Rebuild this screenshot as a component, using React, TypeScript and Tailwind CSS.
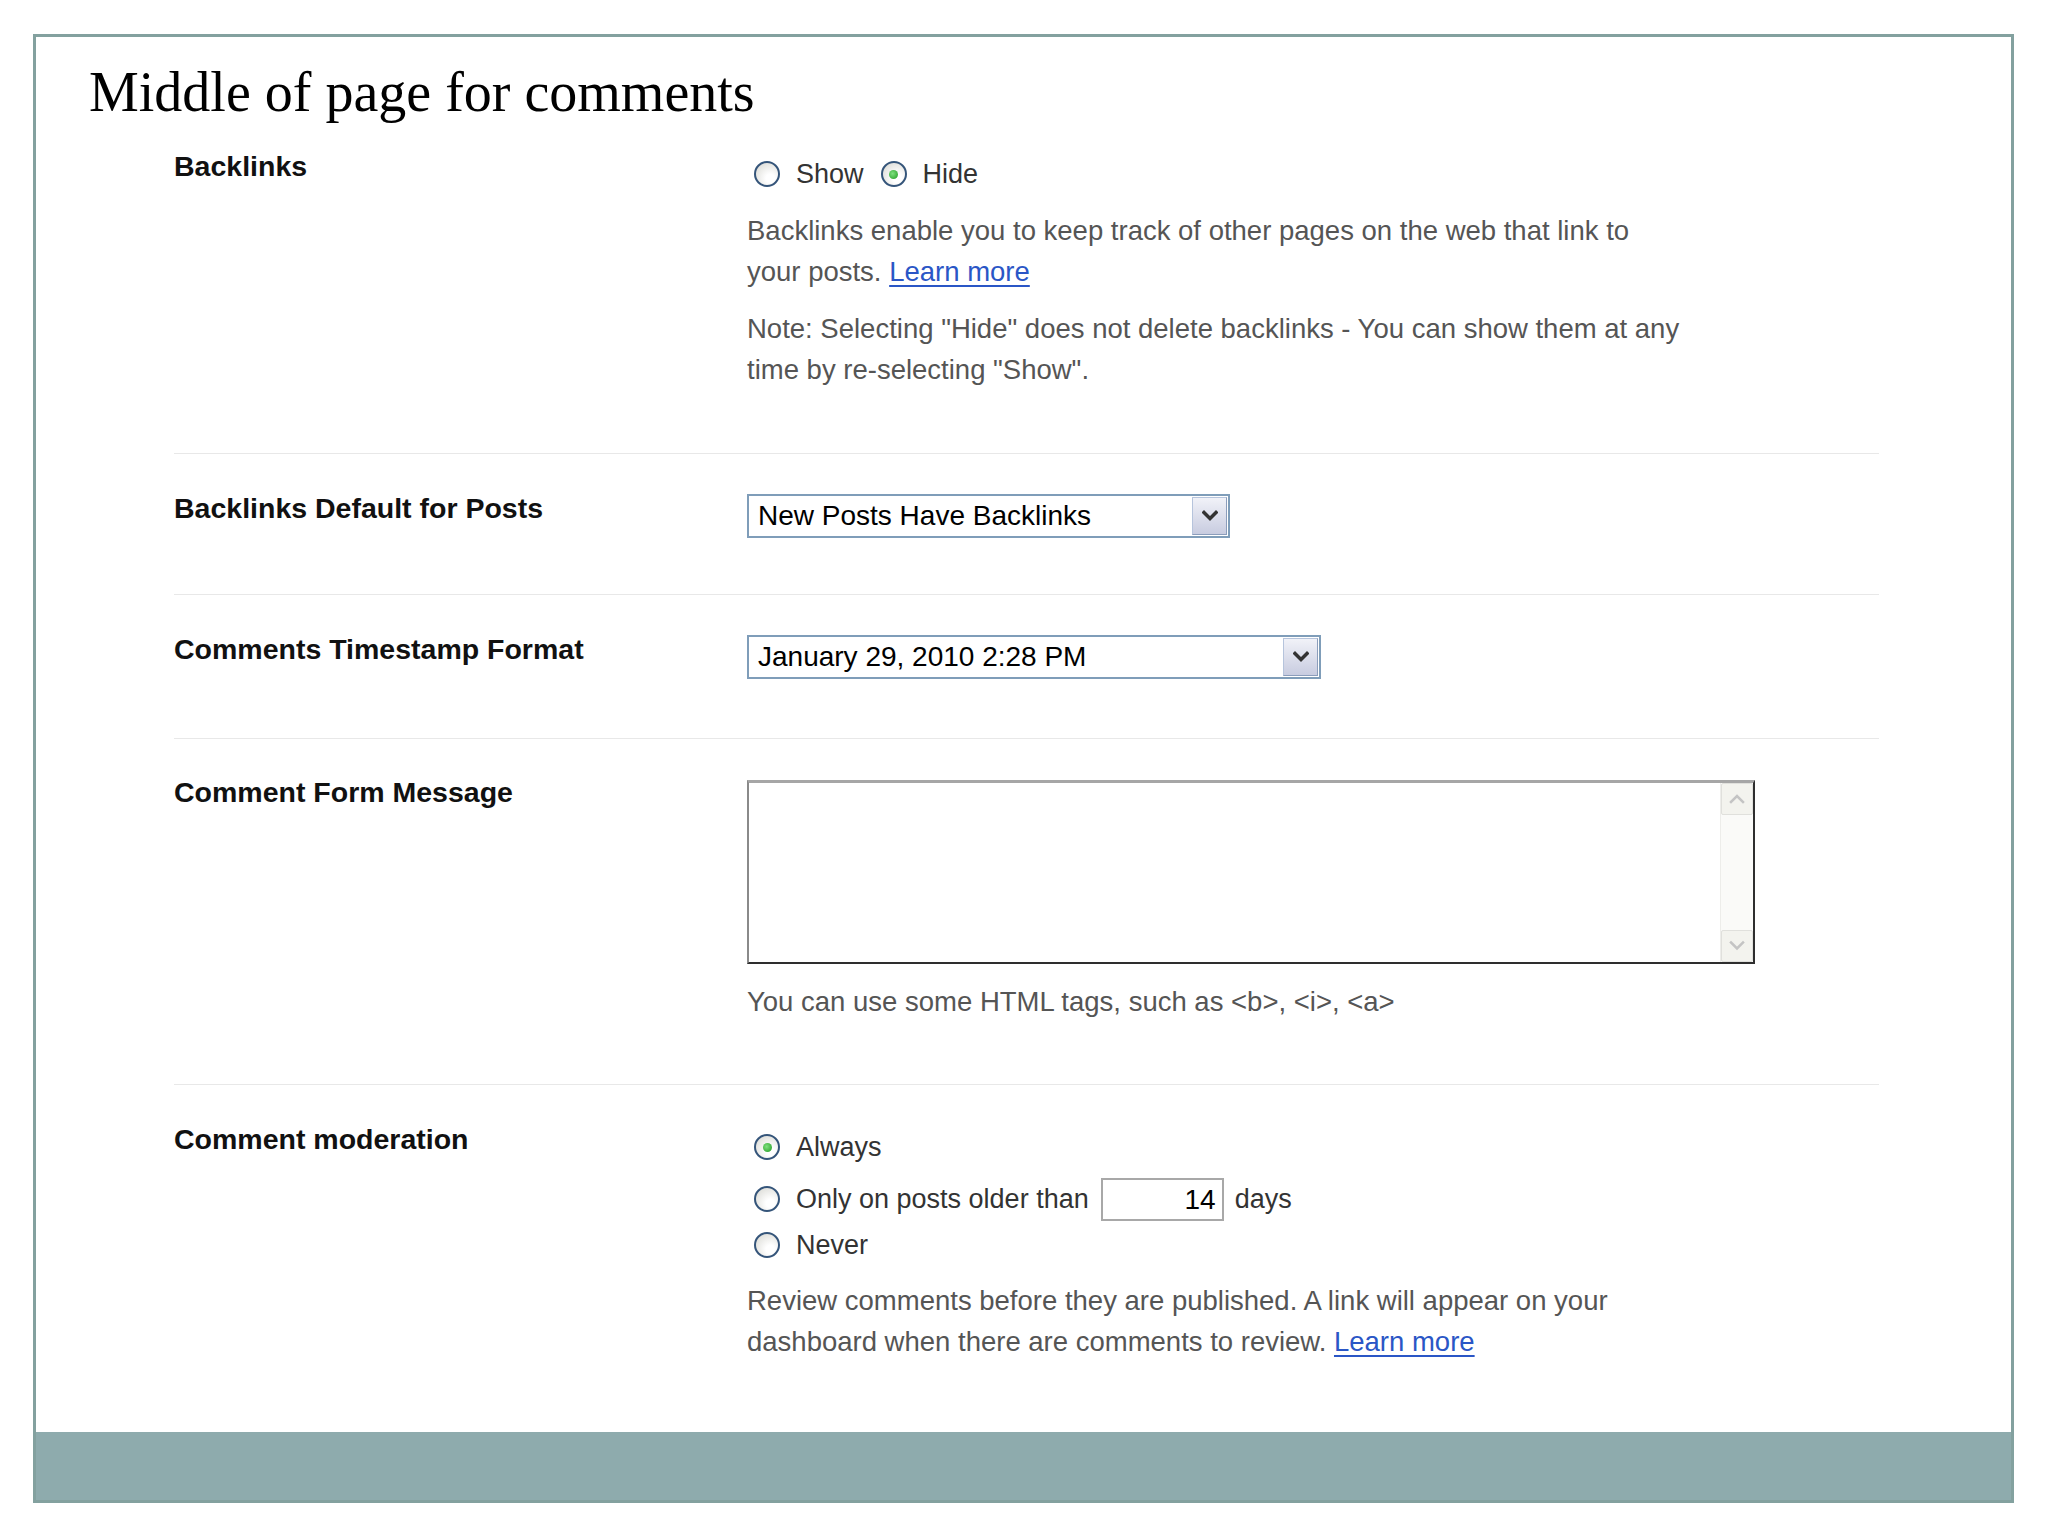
const sans = 'font-["Liberation_Sans",Arial,sans-serif]';

function Radio({ checked }: { checked?: boolean }) {
  return (
    <span className="flex h-[26px] w-[26px] shrink-0 items-center justify-center rounded-full border-2 border-[#35557a] bg-[radial-gradient(circle_at_65%_70%,#ffffff_20%,#d6d6d0_100%)]">
      {checked && (
        <span className="h-[9px] w-[9px] rounded-full bg-[radial-gradient(circle_at_40%_40%,#7fe07f,#1f9a1f)]" />
      )}
    </span>
  );
}

function Chevron({ color, width, up }: { color: string; width: number; up?: boolean }) {
  return (
    <svg width="16" height="12" viewBox="0 0 16 12" fill="none">
      <path d={up ? 'M2 9 L8 3 L14 9' : 'M2 2.5 L8 8.5 L14 2.5'} stroke={color} strokeWidth={width} strokeLinecap="square" />
    </svg>
  );
}

function SelectArrow() {
  return (
    <div className="flex w-[35px] shrink-0 items-center justify-center border border-[#b6c4dc] border-r-[#8b9dbb] border-b-[#8b9dbb] bg-gradient-to-b from-[#f1f2f8] to-[#c8cce0]">
      <Chevron color="#333333" width={3.5} />
    </div>
  );
}

export default function App() {
  return (
    <div className={`h-[1536px] w-[2048px] overflow-hidden bg-white pt-[34px] pl-[33px] ${sans}`}>
      <div className="flex h-[1469px] w-[1981px] flex-col border-[3px] border-[#83a19f]">
        <div className="flex-1">
          {/* heading */}
          <h1 className='mt-[23px] pl-[53px] font-["Liberation_Serif","Times_New_Roman",serif] text-[56px] leading-[64px] text-black'>
            Middle of page for comments
          </h1>

          <div className="ml-[138px] w-[1705px]">
            {/* Backlinks */}
            <div className="flex border-b border-[#e8e8e8]">
              <div className="w-[573px] shrink-0 pt-[24px] text-[28.5px] leading-[36px] font-bold text-[#111]">Backlinks</div>
              <div className="pt-[32px] pb-[63px]">
                <div className="flex h-[36px] items-center text-[27px] text-[#333]">
                  <span className="ml-[7px]"><Radio /></span>
                  <span className="ml-[16px]">Show</span>
                  <span className="ml-[17px]"><Radio checked /></span>
                  <span className="ml-[16px]">Hide</span>
                </div>
                <p className="mt-[18px] text-[27.5px] leading-[41px] text-[#555]">
                  Backlinks enable you to keep track of other pages on the web that link to
                  <br />
                  your posts. <a className="text-[#2a56c6] underline underline-offset-4">Learn more</a>
                </p>
                <p className="mt-[16px] text-[27.5px] leading-[41px] text-[#555]">
                  Note: Selecting "Hide" does not delete backlinks - You can show them at any
                  <br />
                  time by re-selecting "Show".
                </p>
              </div>
            </div>

            {/* Backlinks default */}
            <div className="flex border-b border-[#e8e8e8]">
              <div className="w-[573px] shrink-0 pt-[36px] text-[28.5px] leading-[36px] font-bold text-[#111]">Backlinks Default for Posts</div>
              <div className="pt-[40px] pb-[56px]">
                <div className="flex h-[44px] w-[483px] border-2 border-[#7f9db9] bg-white p-[1px]">
                  <div className="flex-1 pl-[8px] text-[28px] leading-[38px] text-black">New Posts Have Backlinks</div>
                  <SelectArrow />
                </div>
              </div>
            </div>

            {/* Timestamp */}
            <div className="flex border-b border-[#e8e8e8]">
              <div className="w-[573px] shrink-0 pt-[36px] text-[28.5px] leading-[36px] font-bold text-[#111]">Comments Timestamp Format</div>
              <div className="pt-[40px] pb-[59px]">
                <div className="flex h-[44px] w-[574px] border-2 border-[#7f9db9] bg-white p-[1px]">
                  <div className="flex-1 pl-[8px] text-[28px] leading-[38px] text-black">January 29, 2010 2:28 PM</div>
                  <SelectArrow />
                </div>
              </div>
            </div>

            {/* Comment form message */}
            <div className="flex border-b border-[#e8e8e8]">
              <div className="w-[573px] shrink-0 pt-[35px] text-[28.5px] leading-[36px] font-bold text-[#111]">Comment Form Message</div>
              <div className="pt-[41px] pb-[62px]">
                <div className="flex h-[184px] w-[1008px] border-2 border-t-[3px] border-[#2e2e2e] border-t-[#a6a6a6] border-l-[#8a8a8a] bg-white">
                  <div className="flex-1" />
                  <div className="flex w-[33px] flex-col justify-between border-l border-[#ededea] bg-[#fafaf8]">
                    <div className="flex h-[32px] items-center justify-center rounded-[2px] border border-[#e0e0dc] bg-[#f3f3ee]">
                      <Chevron color="#c4c4c4" width={2.5} up />
                    </div>
                    <div className="flex h-[32px] items-center justify-center rounded-[2px] border border-[#e0e0dc] bg-[#f3f3ee]">
                      <Chevron color="#c4c4c4" width={2.5} />
                    </div>
                  </div>
                </div>
                <p className="mt-[17px] text-[27.5px] leading-[41px] text-[#555]">
                  You can use some HTML tags, such as &lt;b&gt;, &lt;i&gt;, &lt;a&gt;
                </p>
              </div>
            </div>

            {/* Moderation */}
            <div className="flex">
              <div className="w-[573px] shrink-0 pt-[36px] text-[28.5px] leading-[36px] font-bold text-[#111]">Comment moderation</div>
              <div className="pt-[40px] text-[27px] text-[#333]">
                <div className="flex h-[44px] items-center">
                  <span className="ml-[7px]"><Radio checked /></span>
                  <span className="ml-[16px]">Always</span>
                </div>
                <div className="mt-[8px] flex h-[44px] items-center">
                  <span className="ml-[7px]"><Radio /></span>
                  <span className="ml-[16px]">Only on posts older than</span>
                  <div className="ml-[12px] h-[43px] w-[123px] border-2 border-[#a8a8a8] bg-white pr-[6px] text-right text-[28px] leading-[39px] text-black">14</div>
                  <span className="ml-[11px]">days</span>
                </div>
                <div className="mt-[2px] flex h-[44px] items-center">
                  <span className="ml-[7px]"><Radio /></span>
                  <span className="ml-[16px]">Never</span>
                </div>
                <p className="mt-[13px] text-[27.5px] leading-[41px] text-[#555]">
                  Review comments before they are published. A link will appear on your
                  <br />
                  dashboard when there are comments to review. <a className="text-[#2a56c6] underline underline-offset-4">Learn more</a>
                </p>
              </div>
            </div>
          </div>
        </div>

        {/* footer band */}
        <div className="h-[68px] bg-[#8eabad]" />
      </div>
    </div>
  );
}
